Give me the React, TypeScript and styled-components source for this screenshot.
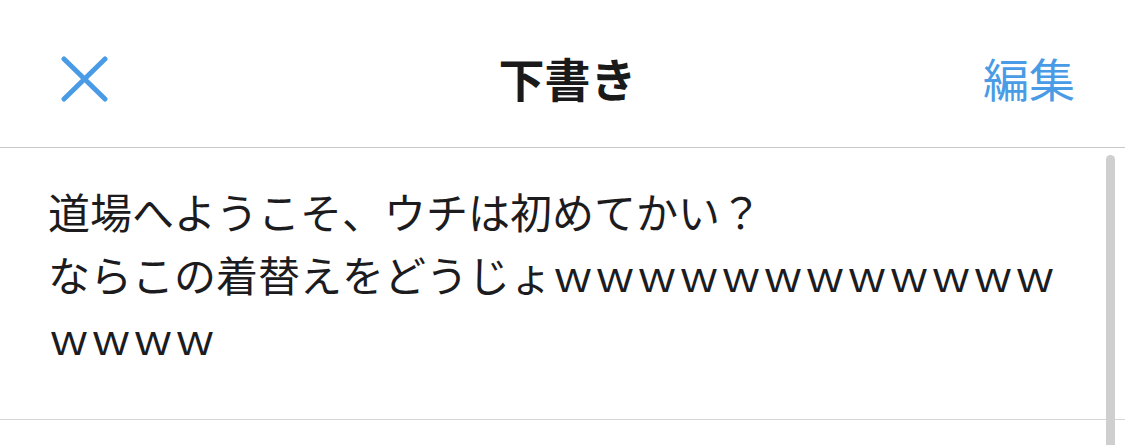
import styled, { createGlobalStyle } from 'styled-components';

const GlobalStyle = createGlobalStyle`
  html, body {
    margin: 0;
    padding: 0;
    background: #ffffff;
  }
  body {
    font-family: "Noto Sans CJK JP", "Noto Sans", sans-serif;
    color: #1c1c1e;
  }
`;

const Screen = styled.div`
  width: 1125px;
  height: 445px;
  overflow: hidden;
  position: relative;
  background: #ffffff;
`;

const NavBar = styled.header`
  box-sizing: border-box;
  height: 148px;
  display: grid;
  grid-template-columns: 1fr auto 1fr;
  align-items: center;
  padding: 6px 50px 0 60px;
  border-bottom: 1px solid #c8c8cc;
`;

const CloseButton = styled.button`
  justify-self: start;
  width: 48px;
  height: 48px;
  padding: 0;
  margin-top: 6px;
  border: none;
  background: none;
  display: flex;
  align-items: center;
  justify-content: center;
`;

const Title = styled.h1`
  margin: 0;
  font-size: 46px;
  font-weight: 700;
  color: #1a1a1a;
  line-height: 1;
`;

const EditButton = styled.button`
  justify-self: end;
  border: none;
  background: none;
  padding: 0;
  font-family: "Noto Sans CJK JP", sans-serif;
  font-size: 46px;
  font-weight: 400;
  color: #4a9be6;
  line-height: 1;
`;

const Draft = styled.div`
  padding: 31px 60px 51px 48px;
  border-bottom: 1px solid #d6d6da;
`;

const DraftText = styled.p`
  margin: 0;
  font-size: 42px;
  line-height: 63px;
  color: #1c1c1e;
  white-space: pre-wrap;
  word-break: break-all;
`;

const ScrollIndicator = styled.div`
  position: absolute;
  top: 155px;
  right: 10px;
  width: 9px;
  bottom: -20px;
  border-radius: 5px;
  background: #cfcfcf;
`;

const CloseIcon = () => (
  <svg width="48" height="48" viewBox="0 0 48 48" fill="none">
    <path
      d="M4 3 L45 43 M45 3 L4 43"
      stroke="#4a9be6"
      strokeWidth="5"
      strokeLinecap="round"
    />
  </svg>
);

export default function App() {
  return (
    <Screen>
      <GlobalStyle />
      <NavBar>
        <CloseButton aria-label="閉じる">
          <CloseIcon />
        </CloseButton>
        <Title>下書き</Title>
        <EditButton>編集</EditButton>
      </NavBar>
      <Draft>
        <DraftText>
          {'道場へようこそ、ウチは初めてかい？\nならこの着替えをどうじょｗｗｗｗｗｗｗｗｗｗｗｗｗｗｗｗ'}
        </DraftText>
      </Draft>
      <ScrollIndicator />
    </Screen>
  );
}
